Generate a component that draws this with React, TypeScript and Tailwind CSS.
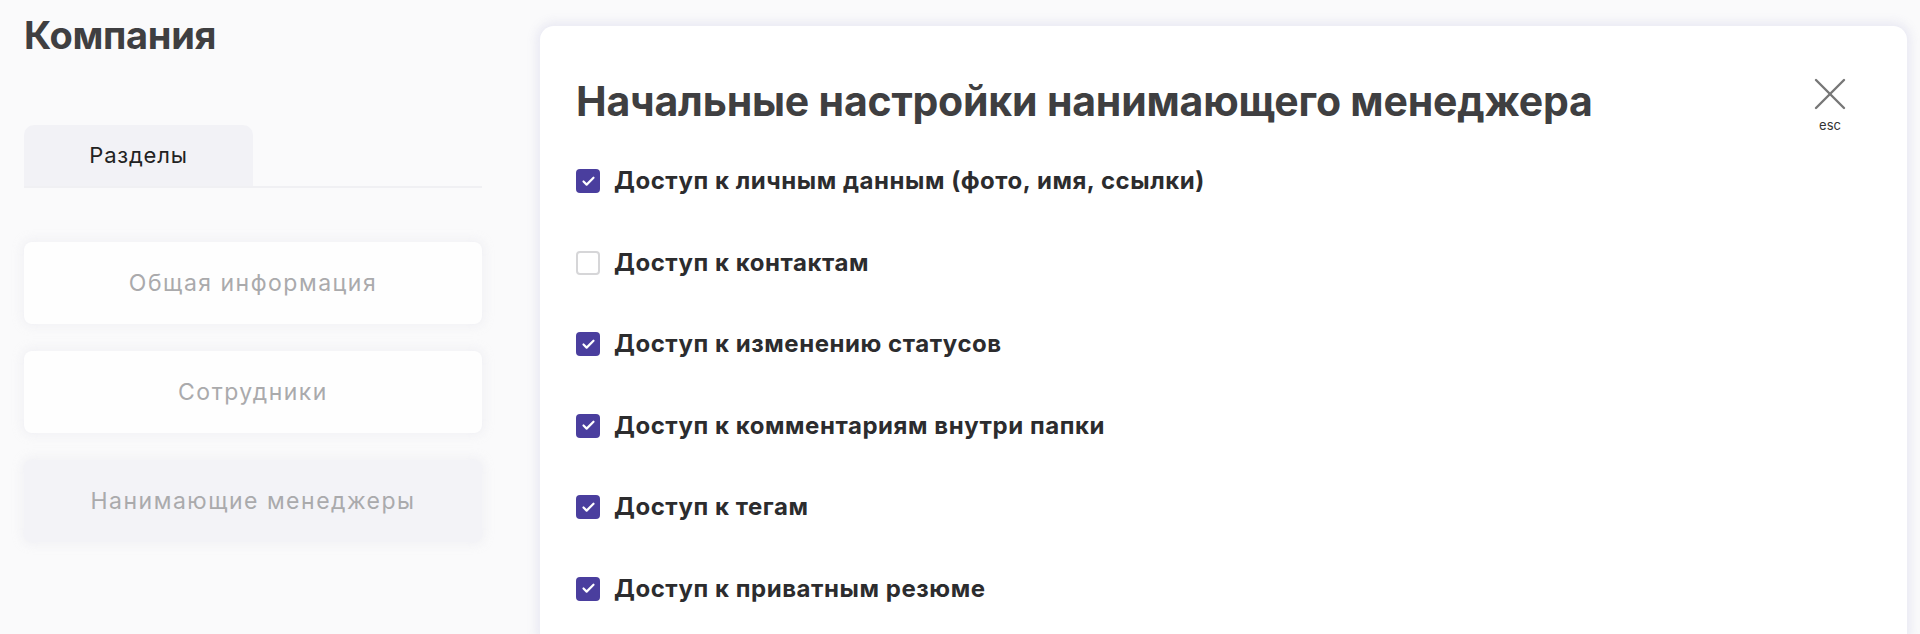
import { Check } from "lucide-react";

const sections = [
  { label: "Общая информация", active: false },
  { label: "Сотрудники", active: false },
  { label: "Нанимающие менеджеры", active: true },
];

const permissions = [
  { label: "Доступ к личным данным (фото, имя, ссылки)", checked: true },
  { label: "Доступ к контактам", checked: false },
  { label: "Доступ к изменению статусов", checked: true },
  { label: "Доступ к комментариям внутри папки", checked: true },
  { label: "Доступ к тегам", checked: true },
  { label: "Доступ к приватным резюме", checked: true },
];

export default function App() {
  return (
    <main className="h-screen overflow-hidden bg-[#fafafb] flex font-['Inter',sans-serif]">
      {/* Sidebar */}
      <aside className="w-[458px] ml-[24px] shrink-0 pt-[12px]">
        <h1 className="text-[38px] leading-[46px] font-bold text-[#3f3f41] tracking-[-0.3px]">Компания</h1>

        <div className="mt-[67px] flex border-b-2 border-[#f0f0f3]">
          <div className="w-[229px] h-[61px] rounded-t-[10px] bg-[#f2f2f6] flex items-center justify-center text-[22px] tracking-[0.8px] text-[#222]">
            Разделы
          </div>
        </div>

        <nav className="mt-[54px] flex flex-col gap-[27px]">
          {sections.map((s) => (
            <div
              key={s.label}
              className={`h-[82px] rounded-[8px] flex items-center justify-center text-[23px] tracking-[1.5px] text-[#aaaaac] shadow-[0_0_8px_3px_rgba(238,238,242,0.7)] ${
                s.active ? "bg-[#f3f3f7]" : "bg-[#fefefe]"
              }`}
            >
              {s.label}
            </div>
          ))}
        </nav>
      </aside>

      {/* Modal panel */}
      <section className="flex-1 ml-[58px] mr-[13px] mt-[26px] bg-white rounded-t-[14px] shadow-[0_0_10px_4px_rgba(232,232,242,0.9)] pl-[36px] pr-[61px]">
        <div className="flex items-start justify-between pt-[50px]">
          <h2 className="text-[41px] leading-[50px] font-bold text-[#3f3f41] tracking-[-0.2px]">
            Начальные настройки нанимающего менеджера
          </h2>
          <button className="flex flex-col items-center mt-[2px] text-[#333]">
            <svg width="32" height="32" viewBox="0 0 32 32" fill="none" stroke="#777" strokeWidth="2.4" strokeLinecap="round">
              <line x1="2" y1="2" x2="30" y2="30" />
              <line x1="30" y1="2" x2="2" y2="30" />
            </svg>
            <span className="text-[13px] leading-[14px] mt-[8px]">esc</span>
          </button>
        </div>

        <ul className="mt-[33px] flex flex-col gap-[49.5px]">
          {permissions.map((p) => (
            <li key={p.label} className="flex items-center gap-[14px] h-[32px]">
              <span
                className={`w-[24px] h-[24px] rounded-[4px] flex items-center justify-center ${
                  p.checked ? "bg-[#4a3e9e]" : "border-2 border-[#d6d6d8] bg-white"
                }`}
              >
                {p.checked && <Check size={15} strokeWidth={3.5} color="white" />}
              </span>
              <span className="text-[24px] font-bold text-[#2c2c2e] tracking-[0.55px]">{p.label}</span>
            </li>
          ))}
        </ul>
      </section>
    </main>
  );
}
